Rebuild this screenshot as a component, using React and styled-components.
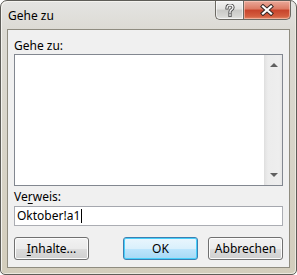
import React from 'react';
import styled, { createGlobalStyle } from 'styled-components';

const GlobalStyle = createGlobalStyle`
  html, body {
    margin: 0;
    padding: 0;
    background: #ffffff;
  }
  body {
    font-family: "Noto Sans", "Open Sans", sans-serif;
    font-size: 12px;
    color: #000000;
  }
`;

// Window frame (beige aero-like border)
const Window = styled.div`
  box-sizing: border-box;
  width: 297px;
  height: 275px;
  border: 1px solid #5e5d58;
  border-radius: 7px 7px 5px 5px;
  background: linear-gradient(to bottom, #e4e4e2 0px, #dcdad3 30px, #d3cdbc 100%);
  box-shadow: inset 1px 1px 0 #f4f3ef, inset -1px -1px 0 #ece9e0;
  padding: 0 6px 6px 6px;
  display: flex;
  flex-direction: column;
`;

const TitleBar = styled.div`
  height: 28px;
  display: flex;
  justify-content: space-between;
  align-items: flex-start;
`;

const Title = styled.div`
  padding: 7px 0 0 1px;
  font-size: 12px;
  line-height: 16px;
  color: #000000;
`;

const CaptionButtons = styled.div`
  display: flex;
  margin-right: -1px;
`;

const CaptionButton = styled.div`
  box-sizing: border-box;
  height: 19px;
  width: ${(p) => p.$width}px;
  border: 1px solid #6c6a63;
  border-top: none;
  display: flex;
  align-items: center;
  justify-content: center;
  ${(p) =>
    p.$close
      ? `
    border-radius: 0 0 5px 0;
    background: linear-gradient(to bottom, #e9a99a 0%, #dc7a63 45%, #c7432b 50%, #d45e3f 85%, #e28c6b 100%);
    box-shadow: inset 0 0 0 1px rgba(255, 210, 195, 0.55);
  `
      : `
    border-right: none;
    border-radius: 0 0 0 5px;
    background: linear-gradient(to bottom, #f2f2f1 0%, #e2e2e0 45%, #c9c9c6 50%, #d7d7d4 85%, #e6e6e3 100%);
    box-shadow: inset 0 0 0 1px rgba(255, 255, 255, 0.6);
  `}
`;

const HelpIcon = () => (
  <svg width="10" height="13" viewBox="0 0 10 13">
    <path
      d="M2 4 C2 1.8 3.4 1 5 1 C6.8 1 8 2 8 3.6 C8 5.2 6.6 5.6 5.6 6.4 C5 6.9 5 7.3 5 8.2 M5 10.2 L5 11.6"
      fill="none"
      stroke="#4a4a4a"
      strokeWidth="3.2"
      strokeLinecap="square"
    />
    <path
      d="M2 4 C2 1.8 3.4 1 5 1 C6.8 1 8 2 8 3.6 C8 5.2 6.6 5.6 5.6 6.4 C5 6.9 5 7.3 5 8.2 M5 10.2 L5 11.6"
      fill="none"
      stroke="#f2f2f2"
      strokeWidth="1.4"
      strokeLinecap="square"
    />
  </svg>
);

const CloseIcon = () => (
  <svg width="14" height="12" viewBox="0 0 14 12">
    <path d="M3 2.5 L11 9.5 M11 2.5 L3 9.5" stroke="#3a2a26" strokeWidth="4.2" strokeLinecap="square" />
    <path d="M3 2.5 L11 9.5 M11 2.5 L3 9.5" stroke="#ffffff" strokeWidth="2.2" strokeLinecap="square" />
  </svg>
);

// Client area
const Client = styled.div`
  flex: 1;
  border: 1px solid #8f8c80;
  background: #f0f0f0;
  padding: 8px 6px 6px 6px;
  display: flex;
  flex-direction: column;
`;

const Label = styled.div`
  line-height: 16px;
  height: 16px;
  margin-top: ${(p) => p.$top || 0}px;
  color: #000000;
`;

const Mnemonic = styled.span`
  text-decoration: underline;
  text-underline-offset: 2px;
`;

const ListBox = styled.div`
  box-sizing: border-box;
  height: 132px;
  border: 1px solid #828790;
  background: #ffffff;
  display: flex;
  justify-content: flex-end;
`;

const ScrollBar = styled.div`
  width: 17px;
  background: linear-gradient(to right, #e3e3e3 0, #ececec 3px, #eeeeee 14px, #e6e6e6 17px);
  border-left: 1px solid #e0e0e0;
  display: flex;
  flex-direction: column;
  justify-content: space-between;
  align-items: center;
  padding: 8px 0;
`;

const Arrow = styled.div`
  width: 0;
  height: 0;
  border-left: 4px solid transparent;
  border-right: 4px solid transparent;
  ${(p) => (p.$down ? 'border-top: 4px solid #606060;' : 'border-bottom: 4px solid #606060;')}
`;

const Input = styled.div`
  box-sizing: border-box;
  height: 20px;
  margin-top: 1px;
  border: 1px solid #abadb3;
  border-top-color: #a5a7ae;
  background: #ffffff;
  padding: 0 2px;
  display: flex;
  align-items: center;
  line-height: 16px;
`;

const Caret = styled.span`
  display: inline-block;
  width: 1px;
  height: 14px;
  background: #000000;
  margin-left: 1px;
`;

const ButtonRow = styled.div`
  display: flex;
  margin-top: 11px;
`;

const Button = styled.div`
  box-sizing: border-box;
  width: 75px;
  height: 23px;
  border-radius: 3px;
  border: 1px solid ${(p) => (p.$default ? '#3c7fb1' : '#707070')};
  background: ${(p) =>
    p.$default
      ? 'linear-gradient(to bottom, #eaf6fd 0%, #d9f0fc 50%, #bee6fd 50%, #a7d9f5 100%)'
      : 'linear-gradient(to bottom, #f2f2f2 0%, #ebebeb 50%, #dddddd 50%, #cfcfcf 100%)'};
  box-shadow: inset 0 0 0 1px ${(p) => (p.$default ? '#48d0fb' : '#fcfcfc')};
  display: flex;
  align-items: center;
  justify-content: center;
  line-height: 16px;
  margin-left: ${(p) => p.$gap || 0}px;
`;

const Spacer = styled.div`
  flex: 1;
`;

const App = () => {
  return (
    <>
      <GlobalStyle />
      <Window>
        <TitleBar>
          <Title>Gehe zu</Title>
          <CaptionButtons>
            <CaptionButton $width={28}>
              <HelpIcon />
            </CaptionButton>
            <CaptionButton $width={48} $close>
              <CloseIcon />
            </CaptionButton>
          </CaptionButtons>
        </TitleBar>
        <Client>
          <Label>Gehe zu:</Label>
          <ListBox>
            <ScrollBar>
              <Arrow />
              <Arrow $down />
            </ScrollBar>
          </ListBox>
          <Label $top={3}>
            Ve<Mnemonic>r</Mnemonic>weis:
          </Label>
          <Input>
            Oktober!a1
            <Caret />
          </Input>
          <ButtonRow>
            <Button>
              <span>
                <Mnemonic>I</Mnemonic>nhalte...
              </span>
            </Button>
            <Spacer />
            <Button $default>OK</Button>
            <Button $gap={10}>Abbrechen</Button>
          </ButtonRow>
        </Client>
      </Window>
    </>
  );
};

export default App;
